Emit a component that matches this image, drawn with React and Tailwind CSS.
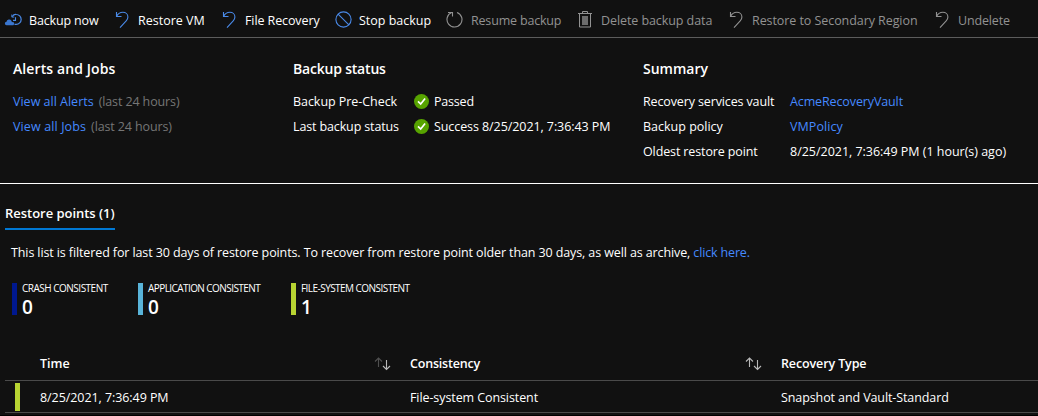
import React from "react";

const BackupIcon = () => (
  <svg className="h-5 w-5 shrink-0" viewBox="0 0 20 20" fill="none">
    <path d="M8.200 6.600C9.300 5 10.700 4.300 12.200 4.500a4.900 4.900 0 0 1 0 9.900H10.500" stroke="#4a8ae8" strokeWidth="1.200" />
    <path d="M11.500 7.200v3.200h-2.500" stroke="#4a8ae8" strokeWidth="1.100" />
    <path d="M7.800 4.500v2.600h2.500" stroke="#4a8ae8" strokeWidth="0.900" />
    <path d="M2.600 15.200a1.700 1.700 0 0 1-.1-3.400 2.700 2.700 0 0 1 4.900-1.100l.6 1.500a1.600 1.600 0 0 1 2.200 1.500c0 .9-.7 1.500-1.500 1.500z" fill="#3a76cf" />
  </svg>
);

const UndoIcon = ({ className }) => (
  <svg className={`h-[17px] w-[14px] shrink-0 ${className}`} viewBox="0 0 14 17" fill="none" stroke="currentColor" strokeWidth="1.1">
    <path d="M1.5 1v4.500h5" />
    <path d="M1.5 5.500C2.8 2.700 5 1.200 7.800 1.200c3 0 5.100 2 5.100 4.700 0 1.700-.6 2.800-1.700 4L5 16.600" />
  </svg>
);

const StopIcon = () => (
  <svg className="h-[17px] w-[17px] shrink-0 text-[#4a8ae8]" viewBox="0 0 17 17" fill="none" stroke="currentColor" strokeWidth="1.1">
    <circle cx="8.500" cy="8.500" r="7.600" />
    <path d="M3.100 3.100l10.800 10.800" />
  </svg>
);

const ResumeIcon = () => (
  <svg className="h-[17px] w-[17px] shrink-0 text-[#929292]" viewBox="0 0 17 17" fill="none" stroke="currentColor" strokeWidth="1.100">
    <path d="M11 1.400A7.500 7.500 0 1 1 5.700 1.500" />
    <path d="M2 1.500h4.500v4" />
  </svg>
);

const TrashIcon = () => (
  <svg className="h-[17px] w-[14px] shrink-0" viewBox="0 0 14 17" fill="none">
    <path d="M0 2.500h14M4.500 2.500v-2h5v2" stroke="#929292" />
    <path d="M1.500 2.500v13.500h11V2.500" stroke="#929292" />
    <path d="M4 5h6v9H4z" fill="#6c6c6c" />
  </svg>
);

const CheckIcon = () => (
  <svg className="mr-[5px] h-[15px] w-[15px] shrink-0" viewBox="0 0 15 15">
    <circle cx="7.500" cy="7.500" r="7.500" fill="#57a300" />
    <path d="M4 7.300l2.700 2.700 4.400-5.500" fill="none" stroke="#fff" strokeWidth="1.700" />
  </svg>
);

const SortIcon = ({ up }) => (
  <svg className="h-[14px] w-[17px] shrink-0" viewBox="0 0 17 14" fill="none" strokeWidth="1.100">
    <path d="M4.500 10V1.200M1 4.500l3.500-3.500L8 4.500" stroke={up} />
    <path d="M12.500 3v9.500M9 9l3.500 3.500L16 9" stroke="#b9b9b9" />
  </svg>
);

const Command = ({ icon, pad, width, label, tracking = "", off }) => (
  <div className={`flex shrink-0 items-center ${width}`}>
    <span className={`flex shrink-0 ${pad}`}>{icon}</span>
    <span className={`pt-px ${tracking} ${off ? "text-[#929292]" : "text-white"}`}>{label}</span>
  </div>
);

const Count = ({ label, value, bar, width, tracking }) => (
  <div className={`flex h-8 ${width}`}>
    <div className={`mr-[5px] w-[5px] ${bar}`} />
    <div>
      <div className={`h-[13px] text-[10px] font-medium leading-[11px] ${tracking}`}>{label}</div>
      <div className="text-[19px] font-semibold leading-[22px]">{value}</div>
    </div>
  </div>
);

const Heading = ({ children, className = "" }) => (
  <h2 className={`mb-[10px] text-[14px] font-semibold leading-5 ${className}`}>{children}</h2>
);

export default function App() {
  return (
    <div className="flex h-[416px] w-[1038px] flex-col overflow-hidden whitespace-nowrap border-b border-black bg-[#111111] font-['Open_Sans','Noto_Sans',sans-serif] text-[12.5px] leading-[25px] text-white">
      <div className="flex h-[38px] shrink-0 items-center border-b border-[#5c5c5c] pl-[4px] pt-[2px]">
        <Command width="w-[111px]" pad="w-[25px]" icon={<BackupIcon />} label="Backup now" tracking="tracking-[-0.15px]" />
        <Command width="w-[107px]" pad="w-[23px]" icon={<UndoIcon className="text-[#4a8ae8]" />} label="Restore VM" />
        <Command width="w-[113px]" pad="w-[23px]" icon={<UndoIcon className="text-[#4a8ae8]" />} label="File Recovery" tracking="tracking-[-0.1px]" />
        <Command width="w-[111px]" pad="w-[24px]" icon={<StopIcon />} label="Stop backup" />
        <Command width="w-[132px]" pad="w-[25px]" icon={<ResumeIcon />} label="Resume backup" tracking="tracking-[-0.18px]" off />
        <Command width="w-[151px]" pad="w-[23px]" icon={<TrashIcon />} label="Delete backup data" tracking="tracking-[-0.08px]" off />
        <Command width="w-[206px]" pad="w-[23px]" icon={<UndoIcon className="text-[#929292]" />} label="Restore to Secondary Region" tracking="tracking-[-0.07px]" off />
        <Command width="w-[80px]" pad="w-[23px]" icon={<UndoIcon className="text-[#929292]" />} label="Undelete" tracking="tracking-[-0.15px]" off />
      </div>

      <div className="flex h-[146px] shrink-0 border-b border-white pl-[13px] pt-[21px]">
        <section className="w-[280px]">
          <Heading className="tracking-[0.1px]">Alerts and Jobs</Heading>
          <div className="flex gap-[5px]">
            <a className="text-[#4589ff]">View all Alerts</a>
            <span className="tracking-[-0.12px] text-[#767676]">(last 24 hours)</span>
          </div>
          <div className="flex gap-[5px]">
            <a className="tracking-[0.12px] text-[#4589ff]">View all Jobs</a>
            <span className="tracking-[-0.12px] text-[#767676]">(last 24 hours)</span>
          </div>
        </section>
        <section className="w-[350px]">
          <Heading className="tracking-[-0.2px]">Backup status</Heading>
          <div className="flex items-center">
            <span className="w-[121px] tracking-[-0.05px]">Backup Pre-Check</span>
            <CheckIcon />
            <span className="tracking-[-0.2px]">Passed</span>
          </div>
          <div className="flex items-center">
            <span className="w-[121px] tracking-[-0.13px]">Last backup status</span>
            <CheckIcon />
            <span className="tracking-[-0.08px]">Success 8/25/2021, 7:36:43 PM</span>
          </div>
        </section>
        <section>
          <Heading>Summary</Heading>
          <div className="flex">
            <span className="w-[147px] tracking-[-0.13px]">Recovery services vault</span>
            <a className="tracking-[-0.12px] text-[#4589ff]">AcmeRecoveryVault</a>
          </div>
          <div className="flex">
            <span className="w-[147px]">Backup policy</span>
            <a className="tracking-[0.08px] text-[#4589ff]">VMPolicy</a>
          </div>
          <div className="flex">
            <span className="w-[147px] tracking-[-0.12px]">Oldest restore point</span>
            <span className="tracking-[-0.02px]">8/25/2021, 7:36:49 PM (1 hour(s) ago)</span>
          </div>
        </section>
      </div>

      <div className="flex h-[46px] shrink-0 items-end pl-[5px]">
        <div className="h-[30px] w-[110px] border-b-2 border-[#0078d4] text-[13px] font-semibold leading-[26px] tracking-[-0.03px]">Restore points (1)</div>
      </div>
      <div className="mt-[10px] h-[25px] shrink-0 pl-[11px]">
        <span className="tracking-[-0.11px]">This list is filtered for last 30 days of restore points. To recover from restore point older than 30 days, as well as archive, </span>
        <a className="tracking-[-0.15px] text-[#4589ff]">click here.</a>
      </div>

      <div className="mt-[18px] flex shrink-0 pl-[12px]">
        <Count width="w-[126px]" bar="bg-[#00188f]" label="CRASH CONSISTENT" value="0" tracking="tracking-[-0.5px]" />
        <Count width="w-[153px]" bar="bg-[#59b4d9]" label="APPLICATION CONSISTENT" value="0" tracking="tracking-[-0.57px]" />
        <Count width="w-[130px]" bar="bg-[#b8d432]" label="FILE-SYSTEM CONSISTENT" value="1" tracking="tracking-[-0.55px]" />
      </div>

      <div className="ml-[5px] mt-[31px] shrink-0">
        <div className="flex h-[35px] items-center border-b border-[#4a4a4a] pl-[35px] font-semibold">
          <div className="flex w-[370px] items-center">
            <span className="w-[334px]">Time</span>
            <span className="pt-px"><SortIcon up="#505050" /></span>
          </div>
          <div className="flex w-[371px] items-center">
            <span className="w-[335px] tracking-[-0.2px]">Consistency</span>
            <span className="pt-px"><SortIcon up="#b9b9b9" /></span>
          </div>
          <span className="tracking-[-0.12px]">Recovery Type</span>
        </div>
        <div className="flex h-[32px] items-center border-b border-[#4a4a4a] pl-[10px]">
          <div className="mr-[20px] h-[28px] w-[5px] bg-[#b8d432]" />
          <span className="w-[370px] pt-[2px] tracking-[-0.07px]">8/25/2021, 7:36:49 PM</span>
          <span className="w-[371px] pt-[2px] tracking-[-0.09px]">File-system Consistent</span>
          <span className="pt-[2px] tracking-[-0.1px]">Snapshot and Vault-Standard</span>
        </div>
      </div>
    </div>
  );
}
